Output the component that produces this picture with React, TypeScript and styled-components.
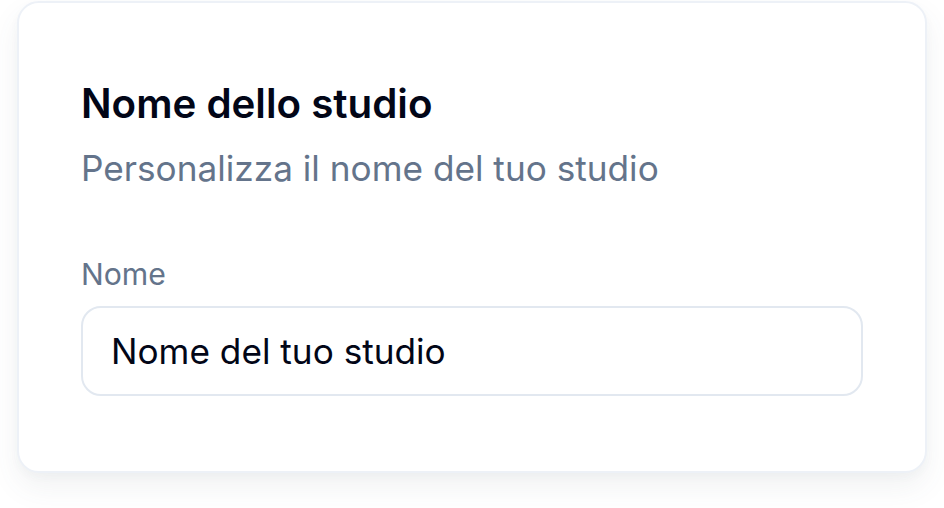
import React from "react";
import styled, { createGlobalStyle } from "styled-components";

const Global = createGlobalStyle`
  html, body { margin: 0; padding: 0; background: #ffffff; }
  body { font-family: Inter, "Noto Sans", "Liberation Sans", sans-serif; -webkit-font-smoothing: antialiased; }
`;

const Page = styled.div`
  padding: 1px 17px 35px 17px;
  width: 944px;
  min-height: 508px;
  box-sizing: border-box;
`;

const Card = styled.section`
  box-sizing: border-box;
  width: 910px;
  height: 472px;
  background: #ffffff;
  border: 2px solid #edf1f7;
  border-radius: 22px;
  box-shadow: 0 14px 30px rgba(71, 85, 105, 0.08), 0 4px 10px rgba(71, 85, 105, 0.03);
  padding: 77px 62px 0 62px;
  display: flex;
  flex-direction: column;
`;

const Title = styled.h2`
  margin: 0;
  font-size: 40.3px;
  line-height: 48px;
  font-weight: 600;
  color: #020617;
`;

const Subtitle = styled.p`
  margin: 18px 0 0 0;
  font-size: 35.2px;
  line-height: 44px;
  font-weight: 400;
  color: #64748b;
`;

const Field = styled.div`
  margin-top: 66px;
  display: flex;
  flex-direction: column;
  gap: 14px;
`;

const Label = styled.label`
  font-size: 30.2px;
  line-height: 36px;
  font-weight: 400;
  color: #64748b;
`;

const Input = styled.input`
  box-sizing: border-box;
  width: 100%;
  height: 90px;
  border: 2px solid #e2e8f0;
  border-radius: 20px;
  padding: 0 28px;
  font-family: inherit;
  font-size: 35.2px;
  color: #020617;
  background: #ffffff;
  outline: none;
  &::placeholder { color: #020617; opacity: 1; }
`;

export default function App() {
  return (
    <Page>
      <Global />
      <Card>
        <Title>Nome dello studio</Title>
        <Subtitle>Personalizza il nome del tuo studio</Subtitle>
        <Field>
          <Label htmlFor="studio-name">Nome</Label>
          <Input id="studio-name" defaultValue="Nome del tuo studio" />
        </Field>
      </Card>
    </Page>
  );
}
